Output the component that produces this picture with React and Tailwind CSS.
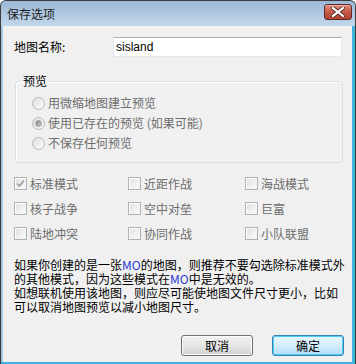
import React from "react";

function Check({ checked, label }) {
  return (
    <div className="flex items-center h-[25px]">
      <div className="w-[13px] h-[13px] border border-[#b1b1b1] bg-[#f4f4f4] flex items-center justify-center shadow-[inset_1px_1px_0_#fff]">
        <div className="w-[9px] h-[9px] bg-gradient-to-br from-[#e2e2e2] to-[#fafafa] flex items-center justify-center">
          {checked && (
            <svg width="9" height="9" viewBox="0 0 9 9">
              <path d="M1 4.5 L3.5 7 L8 1.5" fill="none" stroke="#9a9a9a" strokeWidth="1.6" />
            </svg>
          )}
        </div>
      </div>
      <span className="ml-[3px] text-[#6d6d6d]">{label}</span>
    </div>
  );
}

function Radio({ checked, label }) {
  return (
    <div className="flex items-center h-[20px]">
      <div className="w-[13px] h-[13px] rounded-full border border-[#b8b8b8] bg-gradient-to-br from-[#e0e0e0] to-[#fbfbfb] flex items-center justify-center">
        {checked && (
          <div className="w-[7px] h-[7px] rounded-full bg-gradient-to-br from-[#8a8a8a] to-[#c8c8c8] border border-[#9a9a9a]" />
        )}
      </div>
      <span className="ml-[3px] text-[#6d6d6d]">{label}</span>
    </div>
  );
}

export default function App() {
  return (
    <div className="w-[356px] h-[364px] flex flex-col bg-[#3fb3dc] border-l border-r border-t border-[#3c3c3c] rounded-t-[6px] overflow-hidden font-['Noto_Sans_CJK_SC',sans-serif] text-[12px] leading-[14px] text-black">
      {/* title bar */}
      <div className="h-[25px] flex items-center justify-between bg-gradient-to-b from-[#9cb7d6] to-[#c3d7eb] pl-[6px] pr-[3px] shrink-0">
        <span className="text-[12px] text-[#1e1e1e]">保存选项</span>
        <div className="w-[28px] h-[16px] -mt-[3px] rounded-[3px] border border-[#5c2a2a] bg-gradient-to-b from-[#e08c7c] via-[#c65a48] to-[#b04232] flex items-center justify-center shadow-[inset_0_1px_0_#f0b0a0]">
          <svg width="14" height="10" viewBox="0 0 14 10">
            <path d="M2 1 L12 9 M12 1 L2 9" stroke="#5a2a2a" strokeWidth="4" strokeLinecap="square" />
            <path d="M2 1 L12 9 M12 1 L2 9" stroke="#ffffff" strokeWidth="2.2" strokeLinecap="square" />
          </svg>
        </div>
      </div>
      {/* body frame */}
      <div className="flex-1 flex bg-[#3fb3dc] pb-[2px] pr-[1px]">
        <div className="w-[2px] bg-gradient-to-r from-[#8fb8e0] to-[#b7d2ec]" />
        <div className="flex-1 bg-[#f0f0f0] flex flex-col">
          {/* name row */}
          <div className="flex items-center mt-[11px] pl-[11px]">
            <span className="w-[99px]">地图名称:</span>
            <div className="w-[229px] h-[20px] bg-white border border-[#e3e9ef] border-t-[#abadb3] flex items-center pl-[2px] font-['Liberation_Sans',sans-serif] text-[12px]">
              sisland
            </div>
          </div>
          {/* group box */}
          <fieldset className="ml-[12px] mt-[17px] w-[328px] border border-[#d5dfe5] rounded-[3px] pl-[5px] pb-[9px] shadow-[inset_1px_1px_0_#fff]">
            <legend className="px-[2px] leading-[14px]">预览</legend>
            <div className="mt-[5px] ml-[11px] flex flex-col">
              <Radio label="用微缩地图建立预览" />
              <Radio checked label="使用已存在的预览 (如果可能)" />
              <Radio label="不保存任何预览" />
            </div>
          </fieldset>
          {/* checkboxes */}
          <div className="mt-[8px] pl-[11px] grid grid-cols-[114px_117px_1fr]">
            <Check checked label="标准模式" />
            <Check label="近距作战" />
            <Check label="海战模式" />
            <Check label="核子战争" />
            <Check label="空中对垒" />
            <Check label="巨富" />
            <Check label="陆地冲突" />
            <Check label="协同作战" />
            <Check label="小队联盟" />
          </div>
          {/* note */}
          <div className="mt-[12px] pl-[11px] leading-[14px] whitespace-nowrap">
            <div>
              如果你创建的是一张<span className="text-[#2a3bd0]">MO</span>的地图，则推荐不要勾选除标准模式外
              <br />
              的其他模式，因为这些模式在<span className="text-[#2a3bd0]">MO</span>中是无效的。
            </div>
            <div>
              如想联机使用该地图，则应尽可能使地图文件尺寸更小，比如
              <br />
              可以取消地图预览以减小地图尺寸。
            </div>
          </div>
          {/* buttons */}
          <div className="mt-auto flex justify-end gap-[19px] pr-[8px] pb-[6px]">
            <div className="w-[72px] h-[21px] rounded-[3px] border border-[#707070] bg-gradient-to-b from-[#f2f2f2] via-[#e6e6e6] to-[#d2d2d2] shadow-[inset_0_0_0_1px_#fbfbfb] flex items-center justify-center">
              取消
            </div>
            <div className="w-[72px] h-[21px] rounded-[3px] border border-[#3c7fb1] bg-gradient-to-b from-[#e8f5fc] via-[#d4eefb] to-[#b0dcf6] shadow-[inset_0_0_0_1px_#48d0f8] flex items-center justify-center">
              确定
            </div>
          </div>
        </div>
        <div className="w-[2px] bg-[#3fb3dc]" />
      </div>
    </div>
  );
}
